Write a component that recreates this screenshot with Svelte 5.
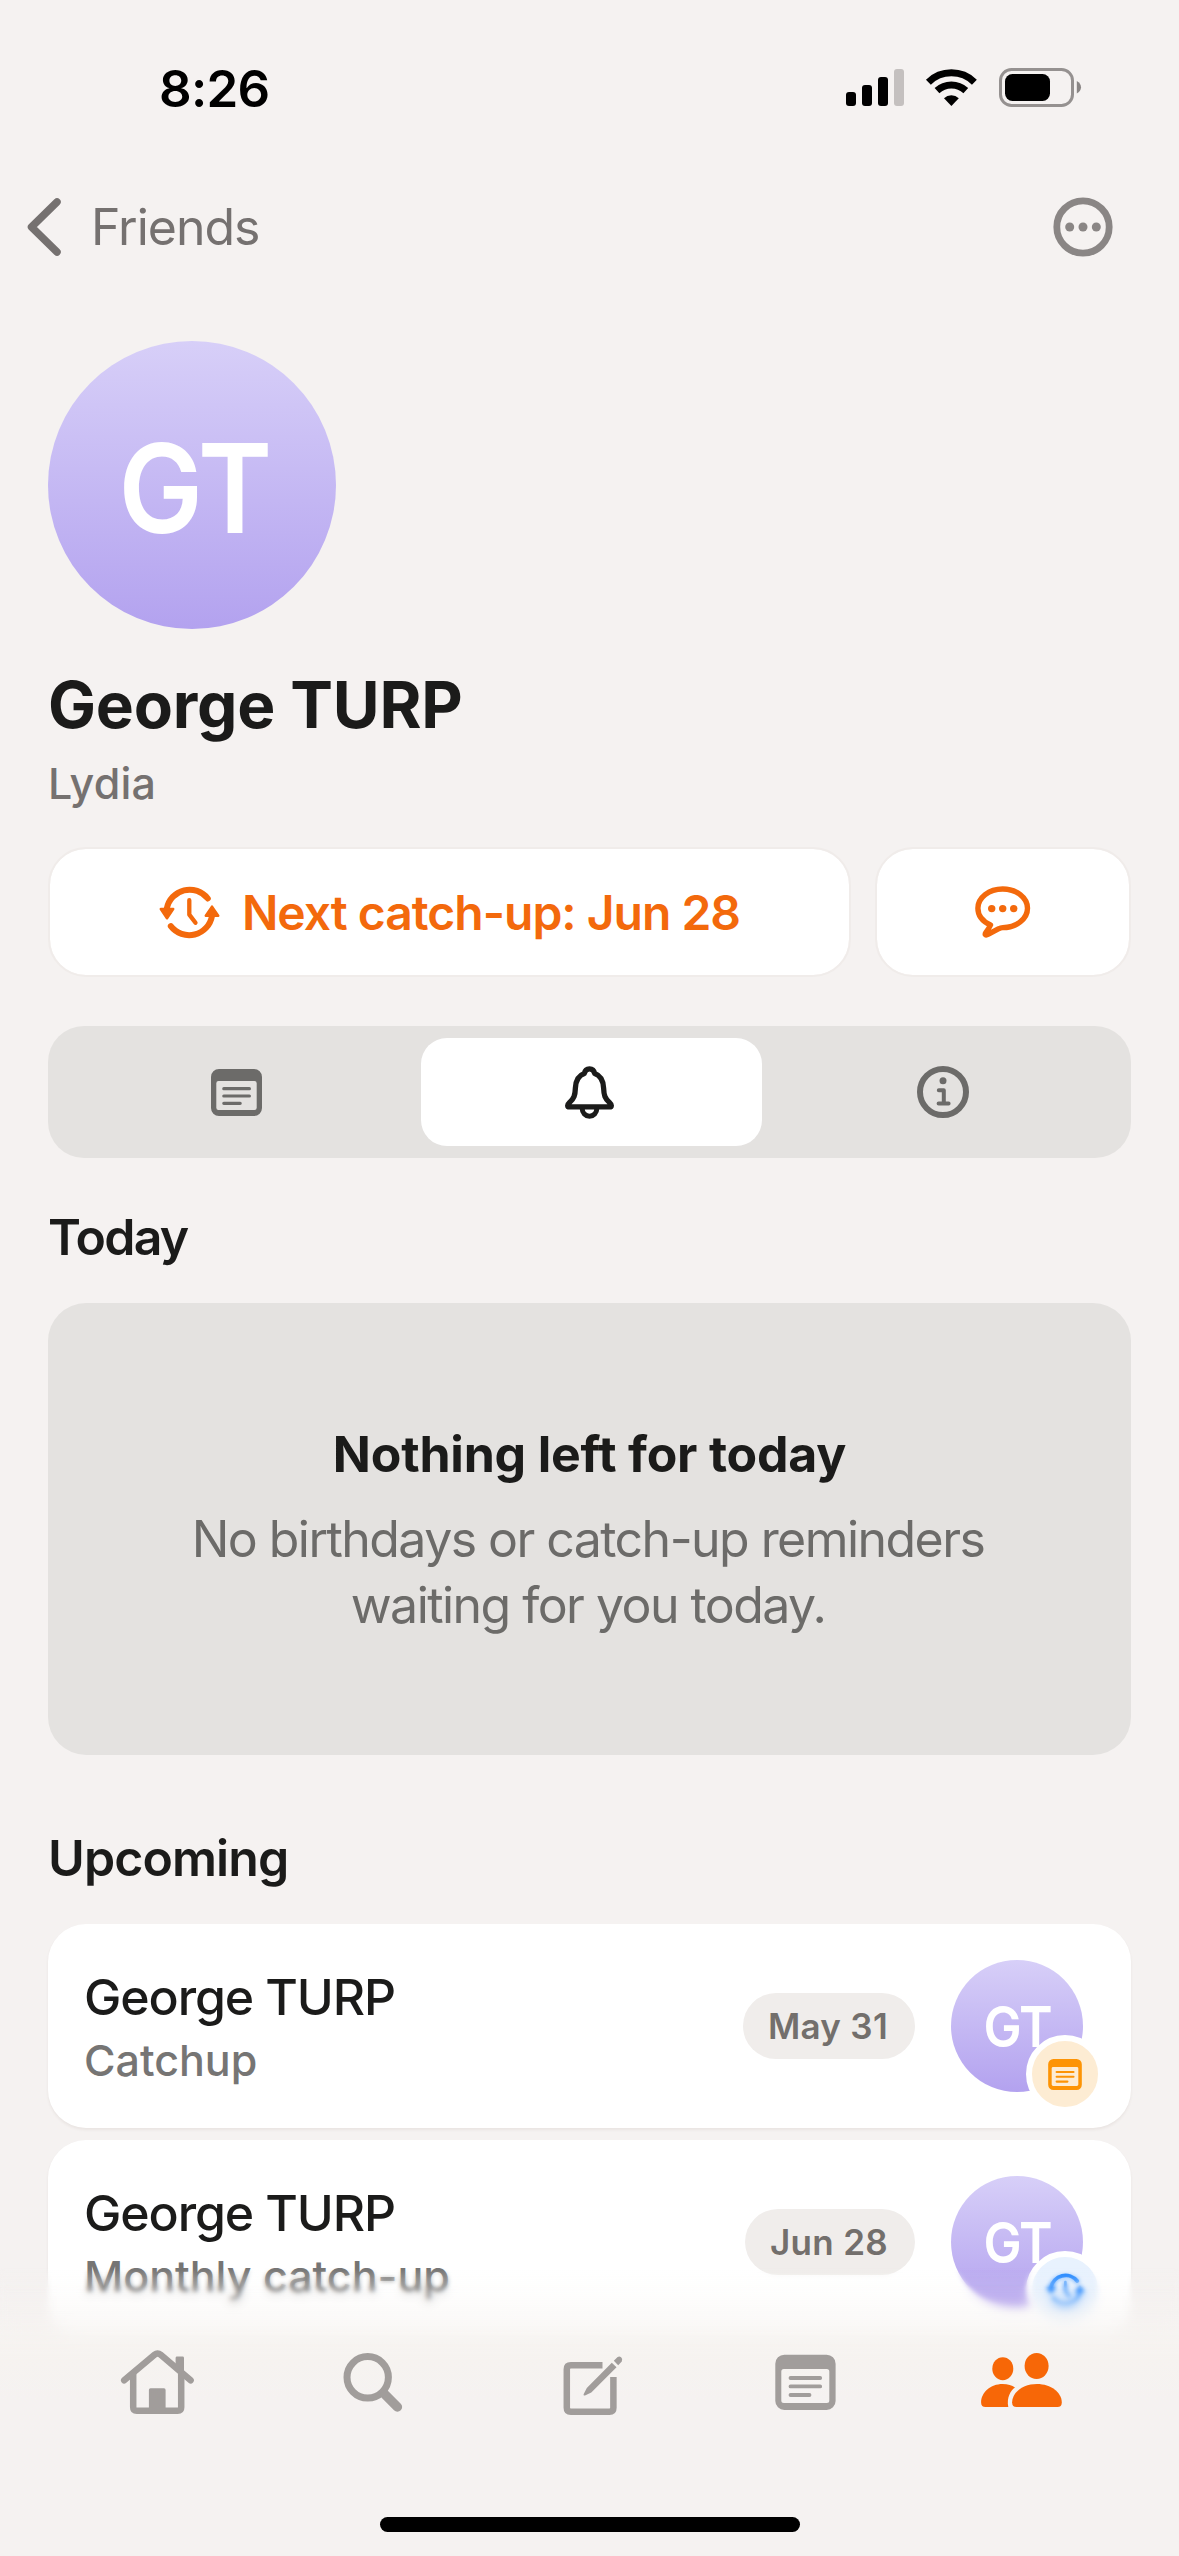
<script lang="ts">
  interface Reminder {
    name: string;
    kind: string;
    date: string;
    icon: 'note' | 'cycle';
  }

  const initials = 'GT';
  const reminders: Reminder[] = [
    { name: 'George TURP', kind: 'Catchup',          date: 'May 31', icon: 'note' },
    { name: 'George TURP', kind: 'Monthly catch-up', date: 'Jun 28', icon: 'cycle' },
  ];

  const views = ['notes', 'reminders', 'info'];
  const tabs = ['home', 'search', 'compose', 'notes', 'friends'];

  let view = $state('reminders');
  let tab = $state('friends');
</script>

{#snippet noteIcon(cls: string)}
  <svg class={cls} viewBox="0 0 51 47">
    <path fill="currentColor" fill-rule="evenodd" d="M8 0h35a8 8 0 0 1 8 8v31a8 8 0 0 1-8 8H8a8 8 0 0 1-8-8V8a8 8 0 0 1 8-8zM7.500 12a2.200 2.200 0 0 0-2.200 2.200v24.600a2.200 2.200 0 0 0 2.200 2.200h36a2.200 2.200 0 0 0 2.200-2.200V14.200a2.200 2.200 0 0 0-2.200-2.200z" />
    <path fill="none" stroke="currentColor" stroke-width="3.200" stroke-linecap="round" d="M12.800 19.700h25.600M12.800 27h25.600M12.800 34.300h16.400" />
  </svg>
{/snippet}

{#snippet cycleIcon(cls: string)}
  <svg class={cls} viewBox="0 0 61 53" fill="none" stroke="currentColor" stroke-linecap="round" stroke-linejoin="round">
    <path stroke-width="6" d="M7.800 22.500A23.200 23.200 0 0 1 48.800 12.500M11.800 40.200A23.200 23.200 0 0 0 53 30" />
    <path fill="currentColor" stroke-width="2.500" d="M1.800 23h12.400L8 32.200zM46.800 29.800h12.400L53 20.600z" />
    <path stroke-width="4.300" d="M30.300 14.200v14.400l6.200 8.200" />
  </svg>
{/snippet}

<div class="screen">
  <header class="status">
    <span class="clock">8:26</span>
    <svg class="signals" viewBox="0 0 236 40">
      <rect x="0" y="24" width="10" height="14" rx="3" />
      <rect x="16" y="17" width="10" height="21" rx="3" />
      <rect x="32" y="9" width="10" height="29" rx="3" />
      <rect x="48" y="1" width="10" height="37" rx="3" fill="#c4c0bf" />
      <g fill="none" stroke="#000" stroke-width="7">
        <path d="M82.400 14.200A33 33 0 0 1 128.400 14.200" />
        <path d="M91 22.600A21.200 21.200 0 0 1 119.800 22.600" />
      </g>
      <path d="M105.400 38L98 30.200a10.700 10.700 0 0 1 14.800 0z" />
      <rect x="154.500" y="1.500" width="72" height="36" rx="11" fill="none" stroke="#959190" stroke-width="3" />
      <rect x="159" y="6" width="45" height="27" rx="7.500" />
      <path fill="#8a8685" d="M230.800 13c5.600 2.600 5.600 10 0 12.600z" />
    </svg>
  </header>

  <nav class="topbar">
    <button class="back">
      <svg viewBox="0 0 34 58" class="chevron"><path d="M30 4L4.500 29L30 54" /></svg>
      <span>Friends</span>
    </button>
    <button class="more" aria-label="More">
      <svg viewBox="0 0 60 60">
        <circle cx="30" cy="30" r="26.200" fill="none" stroke="currentColor" stroke-width="6.800" />
        <circle cx="16.700" cy="30" r="4.500" />
        <circle cx="30" cy="30" r="4.500" />
        <circle cx="43.300" cy="30" r="4.500" />
      </svg>
    </button>
  </nav>

  <main>
    <div class="avatar big"><span class="initials">{initials}</span></div>
    <h1>George TURP</h1>
    <p class="alias">Lydia</p>

    <div class="actions">
      <button class="action next">
        {@render cycleIcon('cycle-lg')}
        <span>Next catch-up: Jun 28</span>
      </button>
      <button class="action chat" aria-label="Message">
        <svg viewBox="0 0 56 52" fill="none" stroke="currentColor" stroke-width="5.400" stroke-linejoin="round">
          <path d="M15.500 39C7.800 35.600 2.900 29.600 2.900 22.300C2.900 11.600 14 3 27.700 3S52.500 11.600 52.500 22.300S41.400 41.600 27.700 41.600C26 41.600 25.200 41.800 23.800 42.700L13.500 48.200C10.500 49.800 9.400 48.600 11 46.300C13 43.600 14.300 41.700 15.500 39z" />
          <g fill="currentColor" stroke="none">
            <circle cx="16.700" cy="22.600" r="3.700" />
            <circle cx="27.700" cy="22.600" r="3.700" />
            <circle cx="38.700" cy="22.600" r="3.700" />
          </g>
        </svg>
      </button>
    </div>

    <div class="segments">
      {#each views as v}
        <button class="segment" class:active={view === v} aria-label={v} onclick={() => (view = v)}>
          {#if v === 'notes'}
            {@render noteIcon('note-lg')}
          {:else if v === 'reminders'}
            <svg class="bell" viewBox="0 0 49 53" fill="none" stroke="currentColor" stroke-width="5.300" stroke-linejoin="round">
              <path d="M24.500 2.800C21.300 2.800 19.800 5 19.300 7.600C13 9.800 10.800 14.500 10.400 22C10.100 29.500 9 32.600 4.800 36.200C1.800 39 2.200 40.900 4.600 40.900H44.400C46.800 40.900 47.200 39 44.200 36.200C40 32.600 38.900 29.500 38.600 22C38.200 14.500 36 9.800 29.700 7.600C29.200 5 27.700 2.800 24.500 2.800z" />
              <path stroke-width="5" d="M17.200 42.500a7.300 7.800 0 0 0 14.600 0" />
            </svg>
          {:else}
            <svg class="info" viewBox="0 0 52 52" fill="none" stroke="currentColor">
              <circle cx="26" cy="26" r="23" stroke-width="6" />
              <circle cx="26" cy="14.700" r="3.500" fill="currentColor" stroke="none" />
              <path stroke-width="4" stroke-linecap="round" stroke-linejoin="round" d="M21.800 24.300h5v13.200M21.600 37.500h10" />
            </svg>
          {/if}
        </button>
      {/each}
    </div>

    <h2>Today</h2>
    <section class="empty">
      <h3>Nothing left for today</h3>
      <p>No birthdays or catch-up reminders<br />waiting for you today.</p>
    </section>

    <h2 class="upcoming">Upcoming</h2>
    <ul>
      {#each reminders as r}
        <li>
          <div class="who">
            <span class="name">{r.name}</span>
            <span class="kind">{r.kind}</span>
          </div>
          <span class="date">{r.date}</span>
          <div class="avatar small">
            <span class="initials">{initials}</span>
            <div class="badge {r.icon}">
              {#if r.icon === 'note'}
                {@render noteIcon('note-sm')}
              {:else}
                {@render cycleIcon('cycle-sm')}
              {/if}
            </div>
          </div>
        </li>
      {/each}
    </ul>
  </main>

  <!-- frosted edge above the tab bar, blur grows towards the bottom -->
  <div class="frost soft"></div>
  <div class="frost medium"></div>
  <div class="frost strong"></div>
  <footer>
    <div class="tabs">
      {#each tabs as t}
        <button class="tab" class:active={tab === t} aria-label={t} onclick={() => (tab = t)}>
          <svg viewBox="0 0 84 72" fill="none" stroke="currentColor" stroke-width="6.500" stroke-linejoin="round">
            {#if t === 'home'}
              <path stroke-linecap="round" d="M9.200 32.300L39.500 6.800Q42.600 4.200 45.700 6.800L75.600 32.300" />
              <path d="M18.200 26v33.200q0 3.500 3.500 3.500h41q3.500 0 3.500-3.500V26" />
              <path fill="currentColor" stroke="none" d="M60.600 20V10q0-1.400 1.400-1.400h5.600q1.400 0 1.400 1.400v18zM35.500 40.300h13.500q1.600 0 1.600 1.600V64H33.900V41.900q0-1.600 1.600-1.600z" />
            {:else if t === 'search'}
              <circle cx="36.700" cy="29.300" r="20.700" stroke-width="7" />
              <path stroke-width="9.500" stroke-linecap="round" d="M54 46.500L66.400 59" />
            {:else if t === 'compose'}
              <path stroke-linejoin="miter" d="M54.500 17.200H22.800q-4 0-4 4v38.600q0 4 4 4h38.600q4 0 4-4V29" />
              <path fill="currentColor" stroke="none" d="M35.600 46.300L38.800 40L63.800 14.800L68.500 19.300L43.300 44.500L37 47.500Q35.200 48 35.600 46.300zM65.800 12.800L69.600 9.100Q71.300 7.700 73.100 9.300T73.800 13.500L70.200 17.200z" />
            {:else if t === 'notes'}
              <path fill="currentColor" stroke="none" fill-rule="evenodd" d="M20.300 6.700h42.300a9 9 0 0 1 9 9V53a9 9 0 0 1-9 9H20.300a9 9 0 0 1-9-9V15.700a9 9 0 0 1 9-9zM19.800 21a2.500 2.500 0 0 0-2.500 2.500v29a2.500 2.500 0 0 0 2.500 2.500h43a2.500 2.500 0 0 0 2.500-2.500v-29a2.500 2.500 0 0 0-2.500-2.500z" />
              <path stroke-width="3.800" stroke-linecap="round" d="M26.500 30h29.700M26.500 38.400h29.700M26.500 47h19" />
            {:else}
              <g fill="currentColor" stroke="none">
                <ellipse cx="22.800" cy="20.700" rx="10.500" ry="11.500" />
                <ellipse cx="56.600" cy="18" rx="12" ry="13" />
                <path d="M1.100 54.500C1.100 44.500 10.500 36 22.500 36C28 36 32 37.500 35 39.400C30.500 42.500 26.500 49.500 28.300 59H5.500Q1.100 59 1.100 54.500z" />
                <path d="M32.100 54.500C32.100 44.500 43 36 57 36S81.800 44.500 81.800 54.500Q81.800 59 77.400 59H36.500Q32.100 59 32.100 54.500z" />
              </g>
            {/if}
          </svg>
        </button>
      {/each}
    </div>
    <div class="home-indicator"></div>
  </footer>
</div>

<style>
  :global(body) { background: #f5f2f1; }

  .screen {
    position: relative;
    width: 1179px; height: 2556px;
    overflow: hidden;
    background: #f5f2f1;
    color: #1b1b1a;
    font-family: Inter, 'Liberation Sans', sans-serif;
  }
  button { border: 0; background: none; padding: 0; font: inherit; letter-spacing: inherit; color: inherit; }
  h1, h2, h3, p, ul { margin: 0; padding: 0; }
  svg { display: block; flex: none; }

  .status {
    display: flex; align-items: center; justify-content: space-between;
    height: 141px; box-sizing: border-box;
    padding: 35px 97px 0 159px;
    color: #000;
  }
  .clock { font-size: 51px; font-weight: 600; letter-spacing: -0.7px; }
  .signals { width: 236px; height: 40px; }

  .topbar {
    display: flex; align-items: center; justify-content: space-between;
    height: 172px;
    padding: 0 66px 0 27px;
  }
  .back { display: flex; align-items: center; gap: 30px; color: #757170; font-size: 50px; letter-spacing: -1px; }
  .chevron { width: 34px; height: 58px; fill: none; stroke: #757170; stroke-width: 7.5px; stroke-linecap: round; stroke-linejoin: round; }
  .more { color: #8a8685; }
  .more svg { width: 60px; height: 60px; fill: currentColor; }

  main { padding: 28px 48px 0; }

  .avatar {
    display: flex; align-items: center; justify-content: center;
    box-sizing: border-box;
    border-radius: 50%;
    background: linear-gradient(#d7cff8, #b3a2ef);
    color: #fff;
  }
  .initials { transform: scaleX(0.91); }
  .big { width: 288px; height: 288px; padding: 6px 0 0 5px; font-size: 124px; font-weight: 600; letter-spacing: -2px; }

  h1 { margin-top: 38px; font-size: 64px; line-height: 76px; font-weight: 700; letter-spacing: -0.2px; }
  .alias { margin-top: 13px; font-size: 43px; line-height: 54px; font-weight: 500; letter-spacing: 0.2px; color: #757170; }

  .actions { display: flex; gap: 24px; margin-top: 37px; }
  .action {
    display: flex; align-items: center; justify-content: center;
    height: 130px; box-sizing: border-box;
    border: 2px solid #f0ecea; border-radius: 38px;
    background: #fff; background-clip: padding-box;
    color: #f3690c;
  }
  .next { width: 803px; gap: 22px; font-size: 48px; font-weight: 600; letter-spacing: -1px; }
  .chat { width: 256px; }
  .cycle-lg { width: 61px; height: 53px; }
  .chat svg { width: 56px; height: 52px; }

  .segments {
    display: grid; grid-template-columns: repeat(3, 1fr);
    height: 132px; box-sizing: border-box;
    margin-top: 49px; padding: 12px;
    border-radius: 36px;
    background: #e4e2e0;
  }
  .segment {
    display: flex; align-items: center; justify-content: center;
    margin: 0 6px;
    border-radius: 26px;
    color: #6c6b69;
  }
  .segment.active { margin: 0 4px 0 8px; padding-right: 4px; background: #fff; color: #1b1b1a; }
  .note-lg { width: 51px; height: 47px; }
  .bell { width: 49px; height: 53px; }
  .info { width: 52px; height: 52px; }

  h2 { margin-top: 49px; font-size: 50px; line-height: 60px; font-weight: 600; letter-spacing: -1.7px; }
  h2.upcoming { margin-top: 73px; letter-spacing: -0.9px; }

  .empty {
    height: 452px; box-sizing: border-box;
    margin-top: 36px; padding-top: 121px;
    border-radius: 38px;
    background: #e4e2e0;
    text-align: center;
  }
  .empty h3 { font-size: 50px; line-height: 60px; font-weight: 700; letter-spacing: -0.2px; }
  .empty p { margin-top: 22px; padding-right: 3px; font-size: 50px; line-height: 66px; letter-spacing: -1.55px; color: #6c6b69; }

  ul { display: flex; flex-direction: column; gap: 12px; margin-top: 36px; list-style: none; }
  li {
    display: flex; align-items: center;
    height: 204px; box-sizing: border-box;
    padding: 0 48px 0 36px;
    border-radius: 38px;
    background: #fff;
    box-shadow: 0 2px 3px rgba(90, 60, 40, 0.07);
  }
  .who { flex: 1; display: flex; flex-direction: column; align-items: flex-start; gap: 6px; padding-top: 2px; }
  .name { font-size: 50px; line-height: 60px; font-weight: 500; letter-spacing: -1.1px; }
  .kind { font-size: 43px; line-height: 54px; font-weight: 500; color: #767574; }
  .date {
    margin-right: 36px; padding: 0 27px 0 25px;
    border-radius: 33px;
    background: #f0edeb;
    color: #736f6c;
    font-size: 35px; line-height: 66px; font-weight: 600; letter-spacing: 0.3px;
  }
  .small { position: relative; width: 132px; height: 132px; padding: 2px 0 0 2px; font-size: 56px; font-weight: 600; letter-spacing: -1px; }
  .badge {
    position: absolute; left: 75px; top: 75px;
    display: flex; align-items: center; justify-content: center;
    width: 66px; height: 66px;
    border: 6px solid #fff; border-radius: 50%;
  }
  .badge.note { background: #fdecd3; color: #fd9405; }
  .badge.cycle { background: #e8f2fe; color: #0a7aff; }
  .note-sm { width: 34px; height: 31px; }
  .cycle-sm { width: 39px; height: 34px; }

  .frost { position: absolute; left: 0; right: 0; bottom: 0; }
  .soft {
    top: 2268px;
    backdrop-filter: blur(2px);
    mask-image: linear-gradient(transparent, #000 20px);
  }
  .medium {
    top: 2284px;
    backdrop-filter: blur(4px);
    mask-image: linear-gradient(transparent, #000 24px);
  }
  .strong {
    top: 2308px;
    backdrop-filter: blur(9px);
    mask-image: linear-gradient(transparent, #000 30px);
  }
  footer {
    position: absolute; left: 0; right: 0; bottom: 0;
    height: 306px; box-sizing: border-box;
    padding: 98px 49px 0;
    background: linear-gradient(
      rgba(246, 243, 240, 0) 20px,
      rgba(246, 243, 240, 0.15) 46px,
      rgba(246, 243, 240, 0.5) 72px,
      rgba(246, 243, 240, 0.92) 98px,
      #f6f3f0 110px,
      #f5f2f1 150px
    );
  }
  .tabs { display: flex; }
  .tab { flex: 1; display: flex; justify-content: center; color: #a19d9b; }
  .tab.active { color: #f76707; }
  .tab svg { width: 84px; height: 72px; }
  .home-indicator { width: 420px; height: 15px; margin: 97px auto 0; border-radius: 8px; background: #000; }
</style>
